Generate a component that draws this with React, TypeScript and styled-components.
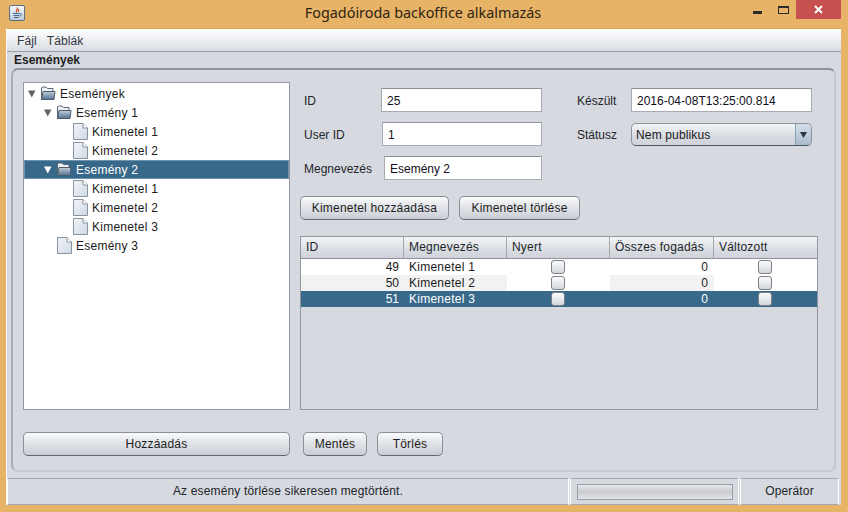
import React from "react";
import styled, { createGlobalStyle } from "styled-components";

const GlobalStyle = createGlobalStyle`
  html, body {
    margin: 0;
    padding: 0;
    background: #e6b367;
  }
  * {
    box-sizing: border-box;
  }
`;

const Frame = styled.div`
  width: 848px;
  height: 512px;
  overflow: hidden;
  display: flex;
  flex-direction: column;
  background: #e6b367;
  font-family: "Liberation Sans", Arial, sans-serif;
  font-size: 12px;
  color: #1a1a1a;
`;
const TitleBar = styled.div`
  height: 28px;
  flex: none;
  display: grid;
  grid-template-columns: 1fr auto 1fr;
`;
const TitleIcon = styled.div`
  padding: 5px 0 0 9px;
`;
const TitleText = styled.div`
  font-family: "Noto Sans", "Open Sans", sans-serif;
  font-size: 14.4px;
  line-height: 26px;
  padding-right: 2px;
  color: #2f2413;
`;
const WindowButtons = styled.div`
  display: flex;
  justify-content: flex-end;
  align-items: flex-start;
  padding-right: 7px;
`;
const WinButton = styled.div<{ $close?: boolean }>`
  width: ${(p) => (p.$close ? "45px" : "26px")};
  height: 19px;
  display: flex;
  align-items: center;
  justify-content: center;
  background: ${(p) => (p.$close ? "#c75050" : "transparent")};
`;
const Body = styled.div`
  margin: 0 7px 0 6px;
  height: 477px;
  flex: none;
  background: #d6d9df;
  border-top: 1px solid #d9a455;
  border-left: 1px solid #fff;
  display: flex;
  flex-direction: column;
`;
const MenuBar = styled.div`
  height: 23px;
  flex: none;
  display: flex;
  gap: 10px;
  padding: 1px 0 0 10px;
  line-height: 22px;
  letter-spacing: 0.1px;
  color: #33363c;
  background: linear-gradient(#ffffff 0%, #f4f5f7 30%, #d9dce2 100%);
  border-bottom: 1px solid #9a9da3;
`;
const SectionTitle = styled.div`
  height: 16px;
  flex: none;
  padding-left: 7px;
  line-height: 16px;
  font-weight: bold;
  color: #1f1f1f;
`;
const Panel = styled.div`
  height: 404px;
  flex: none;
  margin: 0 5px 0 4px;
  padding: 12px 10px 14px;
  border: 2px solid #bcc0c7;
  border-top-color: #8f9298;
  border-left-color: #a9acb3;
  border-right-color: #c3c6cc;
  border-bottom-color: #c6c9cf;
  border-radius: 7px;
  display: grid;
  grid-template-columns: 267px 518px;
  grid-template-rows: 328px 24px;
  column-gap: 10px;
  row-gap: 22px;
`;
const Tree = styled.div`
  background: #fff;
  border: 1px solid #9297a1;
  padding-top: 1px;
`;
const TreeRow = styled.div<{ $level: number; $selected?: boolean }>`
  height: 19px;
  display: flex;
  align-items: center;
  padding-left: ${(p) => 4 + p.$level * 16}px;
  letter-spacing: 0.25px;
  color: ${(p) => (p.$selected ? "#fff" : "#1a1a1a")};
  background: ${(p) => (p.$selected ? "#39698a" : "transparent")};
  box-shadow: ${(p) => (p.$selected ? "inset 0 0 0 1px #6d93ad" : "none")};
`;
const ArrowSlot = styled.span`
  width: 12px;
  flex: none;
  display: flex;
`;
const IconSlot = styled.span<{ $file?: boolean }>`
  width: 20px;
  flex: none;
  display: flex;
  padding-left: ${(p) => (p.$file ? "1px" : "0")};
`;
const RightColumn = styled.div`
  display: flex;
  flex-direction: column;
  padding-top: 6px;
`;
const FormArea = styled.div`
  display: flex;
  gap: 35px;
  padding-left: 4px;
`;
const FormColumn = styled.div<{ $width: number }>`
  width: ${(p) => p.$width}px;
  display: flex;
  flex-direction: column;
  gap: 10px;
`;
const FormRow = styled.div`
  height: 24px;
  display: flex;
  align-items: center;
  justify-content: space-between;
`;
const Label = styled.span`
  padding-top: 2px;
  color: #22252a;
`;
const TextField = styled.div<{ $width: number }>`
  width: ${(p) => p.$width}px;
  height: 24px;
  padding-left: 5px;
  line-height: 24px;
  background: #fff;
  border: 1px solid #a8abb2;
  border-top-color: #8e9197;
  color: #101020;
`;
const Select = styled.div`
  width: 181px;
  height: 23px;
  margin-top: 1px;
  display: flex;
  border: 1px solid #8f949c;
  border-bottom-color: #4d5561;
  border-radius: 5px;
  overflow: hidden;
  background: linear-gradient(#f4f5f7, #d8dbe1 55%, #cfd2d8);
`;
const SelectValue = styled.div`
  flex: 1;
  padding-left: 4px;
  line-height: 22px;
  letter-spacing: 0.15px;
`;
const SelectArrow = styled.div`
  width: 16px;
  display: flex;
  align-items: center;
  justify-content: center;
  border-left: 1px solid #8ca0b3;
  background: linear-gradient(#d3dee8, #a9bccd);
`;
const ButtonRow = styled.div`
  display: flex;
  gap: 10px;
  margin: 16px 0;
`;
const Button = styled.div<{ $width?: number }>`
  width: ${(p) => (p.$width ? `${p.$width}px` : "100%")};
  height: 24px;
  text-align: center;
  line-height: 23px;
  letter-spacing: 0.2px;
  color: #1b1d21;
  border: 1px solid #8b8e94;
  border-bottom-color: #63666c;
  border-radius: 5px;
  background: linear-gradient(#fafbfc 0%, #e6e8ec 35%, #d5d8de 75%, #c9ccd2 100%);
`;
const Table = styled.div`
  flex: 1;
  border: 1px solid #9297a1;
  display: flex;
  flex-direction: column;
`;
const HeaderRow = styled.div`
  height: 22px;
  flex: none;
  display: grid;
  grid-template-columns: 103px 103px 103px 104px 103px;
  border-bottom: 1px solid #8f9298;
  background: linear-gradient(#f3f4f6, #dcdfe4 55%, #cfd2d8);
`;
const HeaderCell = styled.div`
  padding-left: 5px;
  line-height: 21px;
  letter-spacing: 0.2px;
  color: #22252a;
  border-right: 1px solid #a3a6ac;
  &:last-child {
    border-right: none;
  }
`;
const DataRow = styled.div<{ $selected?: boolean }>`
  height: 16px;
  display: grid;
  grid-template-columns: 103px 103px 103px 104px 103px;
  background: ${(p) => (p.$selected ? "#39698a" : "#fff")};
  color: ${(p) => (p.$selected ? "#fff" : "#1a1a1a")};
`;
const DataCell = styled.div<{ $alt?: boolean }>`
  line-height: 16px;
  letter-spacing: 0.25px;
  padding-left: 5px;
  background: ${(p) => (p.$alt ? "#f2f2f2" : "transparent")};
`;
const NumberCell = styled.div<{ $alt?: boolean; $inset: number }>`
  line-height: 16px;
  text-align: right;
  padding-right: ${(p) => p.$inset}px;
  background: ${(p) => (p.$alt ? "#f2f2f2" : "transparent")};
`;
const CheckCell = styled.div`
  display: flex;
  justify-content: center;
  padding: 1px 2px 0 0;
`;
const CheckBox = styled.div`
  width: 14px;
  height: 14px;
  border: 1px solid #7d8188;
  border-radius: 3px;
  background: linear-gradient(#fbfbfc, #e4e6ea 60%, #d2d5da);
`;
const TableFill = styled.div`
  flex: 1;
  background: #d6d9df;
`;
const BottomLeft = styled.div`
  display: flex;
`;
const BottomRight = styled.div`
  display: flex;
  gap: 10px;
  padding-left: 3px;
`;
const StatusBar = styled.div`
  height: 25px;
  flex: none;
  margin-top: 6px;
  display: grid;
  grid-template-columns: 562px 169px 99px;
  column-gap: 1px;
`;
const StatusCell = styled.div`
  text-align: center;
  line-height: 25px;
  letter-spacing: 0.15px;
  color: #22252a;
  border: 1px solid #a4a7ad;
  border-right-color: #fff;
  border-bottom-color: #a4a7ad;
  border-left-color: #fff;
  display: flex;
  align-items: center;
  justify-content: center;
`;
const Progress = styled.div`
  width: 156px;
  height: 16px;
  border: 1px solid #9a9da3;
  background: linear-gradient(#e6e7ea, #c9cbd0 50%, #e2e3e7);
`;

const Triangle = ({ light }: { light?: boolean }) => (
  <svg width="8" height="8" viewBox="0 0 8 8">
    <path d="M0 0.5 H7.5 L3.75 7.5 Z" fill={light ? "#fff" : "#5f6368"} />
  </svg>
);

const FolderIcon = () => (
  <svg width="16" height="15" viewBox="0 0 16 15">
    <defs>
      <linearGradient id="folderFill" x1="0" y1="0" x2="0" y2="1">
        <stop offset="0" stopColor="#c3ced9" />
        <stop offset="1" stopColor="#4f7293" />
      </linearGradient>
    </defs>
    <path d="M1.5 13.5 V2 L2.5 1 H6 L7.5 2.5 H13 V5" fill="#eef1f4" stroke="#5a6675" />
    <path d="M1.5 13.5 L3 5.5 H15 L14 13.5 Z" fill="url(#folderFill)" stroke="#4e5a68" />
  </svg>
);

const FileIcon = () => (
  <svg width="15" height="17" viewBox="0 0 15 17">
    <defs>
      <linearGradient id="fileFill" x1="0" y1="0" x2="1" y2="1">
        <stop offset="0" stopColor="#f2f5f8" />
        <stop offset="1" stopColor="#cfdae6" />
      </linearGradient>
    </defs>
    <path d="M0.5 0.5 H10 L14.5 5 V16.5 H0.5 Z" fill="url(#fileFill)" stroke="#8a929c" />
    <path d="M10 0.5 V5 H14.5" fill="#fff" stroke="#8a929c" />
  </svg>
);

const JavaIcon = () => (
  <svg width="16" height="16" viewBox="0 0 16 16">
    <defs>
      <linearGradient id="javaBox" x1="0" y1="0" x2="0" y2="1">
        <stop offset="0" stopColor="#f7f9fb" />
        <stop offset="1" stopColor="#b9c8d8" />
      </linearGradient>
    </defs>
    <rect x="0.5" y="0.5" width="15" height="15" rx="1.5" fill="url(#javaBox)" stroke="#5d6f82" />
    <path d="M8 2.5 C9.5 4.5 6.5 5 7.5 7.5 M10 4 C9 5 9 6 9.5 7" fill="none" stroke="#d9542b" strokeWidth="1.2" />
    <path d="M4 8.5 H10.5 M4.5 10.5 H10 M5 12.5 H9.5 M10.5 8.5 C13 8 13 11 10 11" fill="none" stroke="#3f6a94" strokeWidth="1" />
  </svg>
);

const treeRows = [
  { level: 0, label: "Események", folder: true },
  { level: 1, label: "Esemény 1", folder: true },
  { level: 2, label: "Kimenetel 1" },
  { level: 2, label: "Kimenetel 2" },
  { level: 1, label: "Esemény 2", folder: true, selected: true },
  { level: 2, label: "Kimenetel 1" },
  { level: 2, label: "Kimenetel 2" },
  { level: 2, label: "Kimenetel 3" },
  { level: 1, label: "Esemény 3" },
];

const columns = ["ID", "Megnevezés", "Nyert", "Összes fogadás", "Változott"];

const tableRows = [
  { id: 49, name: "Kimenetel 1" },
  { id: 50, name: "Kimenetel 2", alt: true },
  { id: 51, name: "Kimenetel 3", selected: true },
];

const App = () => {
  return (
    <Frame>
      <GlobalStyle />
      <TitleBar>
        <TitleIcon>
          <JavaIcon />
        </TitleIcon>
        <TitleText>Fogadóiroda backoffice alkalmazás</TitleText>
        <WindowButtons>
          <WinButton>
            <svg width="9" height="9" viewBox="0 0 9 9">
              <rect width="9" height="3" y="6" fill="#2b2b2b" />
            </svg>
          </WinButton>
          <WinButton>
            <svg width="11" height="11" viewBox="0 0 11 11">
              <rect x="0.5" y="2.5" width="10" height="7" fill="none" stroke="#2b2b2b" />
              <rect width="11" height="2" y="2" fill="#2b2b2b" />
            </svg>
          </WinButton>
          <WinButton $close>
            <svg width="9" height="9" viewBox="0 0 9 9">
              <path d="M1 1 L8 8 M8 1 L1 8" stroke="#fff" strokeWidth="2" />
            </svg>
          </WinButton>
        </WindowButtons>
      </TitleBar>
      <Body>
        <MenuBar>
          <span>Fájl</span>
          <span>Táblák</span>
        </MenuBar>
        <SectionTitle>Események</SectionTitle>
        <Panel>
          <Tree>
            {treeRows.map((row, i) => (
              <TreeRow key={i} $level={row.level} $selected={row.selected}>
                <ArrowSlot>
                  {row.folder && <Triangle light={row.selected} />}
                </ArrowSlot>
                <IconSlot $file={!row.folder}>
                  {row.folder ? <FolderIcon /> : <FileIcon />}
                </IconSlot>
                {row.label}
              </TreeRow>
            ))}
          </Tree>
          <RightColumn>
            <FormArea>
              <FormColumn $width={238}>
                <FormRow>
                  <Label>ID</Label>
                  <TextField $width={161}>25</TextField>
                </FormRow>
                <FormRow>
                  <Label>User ID</Label>
                  <TextField $width={160}>1</TextField>
                </FormRow>
                <FormRow>
                  <Label>Megnevezés</Label>
                  <TextField $width={158}>Esemény 2</TextField>
                </FormRow>
              </FormColumn>
              <FormColumn $width={235}>
                <FormRow>
                  <Label>Készült</Label>
                  <TextField $width={181}>2016-04-08T13:25:00.814</TextField>
                </FormRow>
                <FormRow>
                  <Label>Státusz</Label>
                  <Select>
                    <SelectValue>Nem publikus</SelectValue>
                    <SelectArrow>
                      <svg width="7" height="6" viewBox="0 0 7 6">
                        <path d="M0 0 H7 L3.5 6 Z" fill="#2a3440" />
                      </svg>
                    </SelectArrow>
                  </Select>
                </FormRow>
              </FormColumn>
            </FormArea>
            <ButtonRow>
              <Button $width={149}>Kimenetel hozzáadása</Button>
              <Button $width={121}>Kimenetel törlése</Button>
            </ButtonRow>
            <Table>
              <HeaderRow>
                {columns.map((c) => (
                  <HeaderCell key={c}>{c}</HeaderCell>
                ))}
              </HeaderRow>
              {tableRows.map((row) => (
                <DataRow key={row.id} $selected={row.selected}>
                  <NumberCell $inset={5} $alt={row.alt}>
                    {row.id}
                  </NumberCell>
                  <DataCell $alt={row.alt}>{row.name}</DataCell>
                  <CheckCell>
                    <CheckBox />
                  </CheckCell>
                  <NumberCell $inset={6} $alt={row.alt}>
                    0
                  </NumberCell>
                  <CheckCell>
                    <CheckBox />
                  </CheckCell>
                </DataRow>
              ))}
              <TableFill />
            </Table>
          </RightColumn>
          <BottomLeft>
            <Button>Hozzáadás</Button>
          </BottomLeft>
          <BottomRight>
            <Button $width={64}>Mentés</Button>
            <Button $width={66}>Törlés</Button>
          </BottomRight>
        </Panel>
        <StatusBar>
          <StatusCell>Az esemény törlése sikeresen megtörtént.</StatusCell>
          <StatusCell>
            <Progress />
          </StatusCell>
          <StatusCell>Operátor</StatusCell>
        </StatusBar>
      </Body>
    </Frame>
  );
};

export default App;
